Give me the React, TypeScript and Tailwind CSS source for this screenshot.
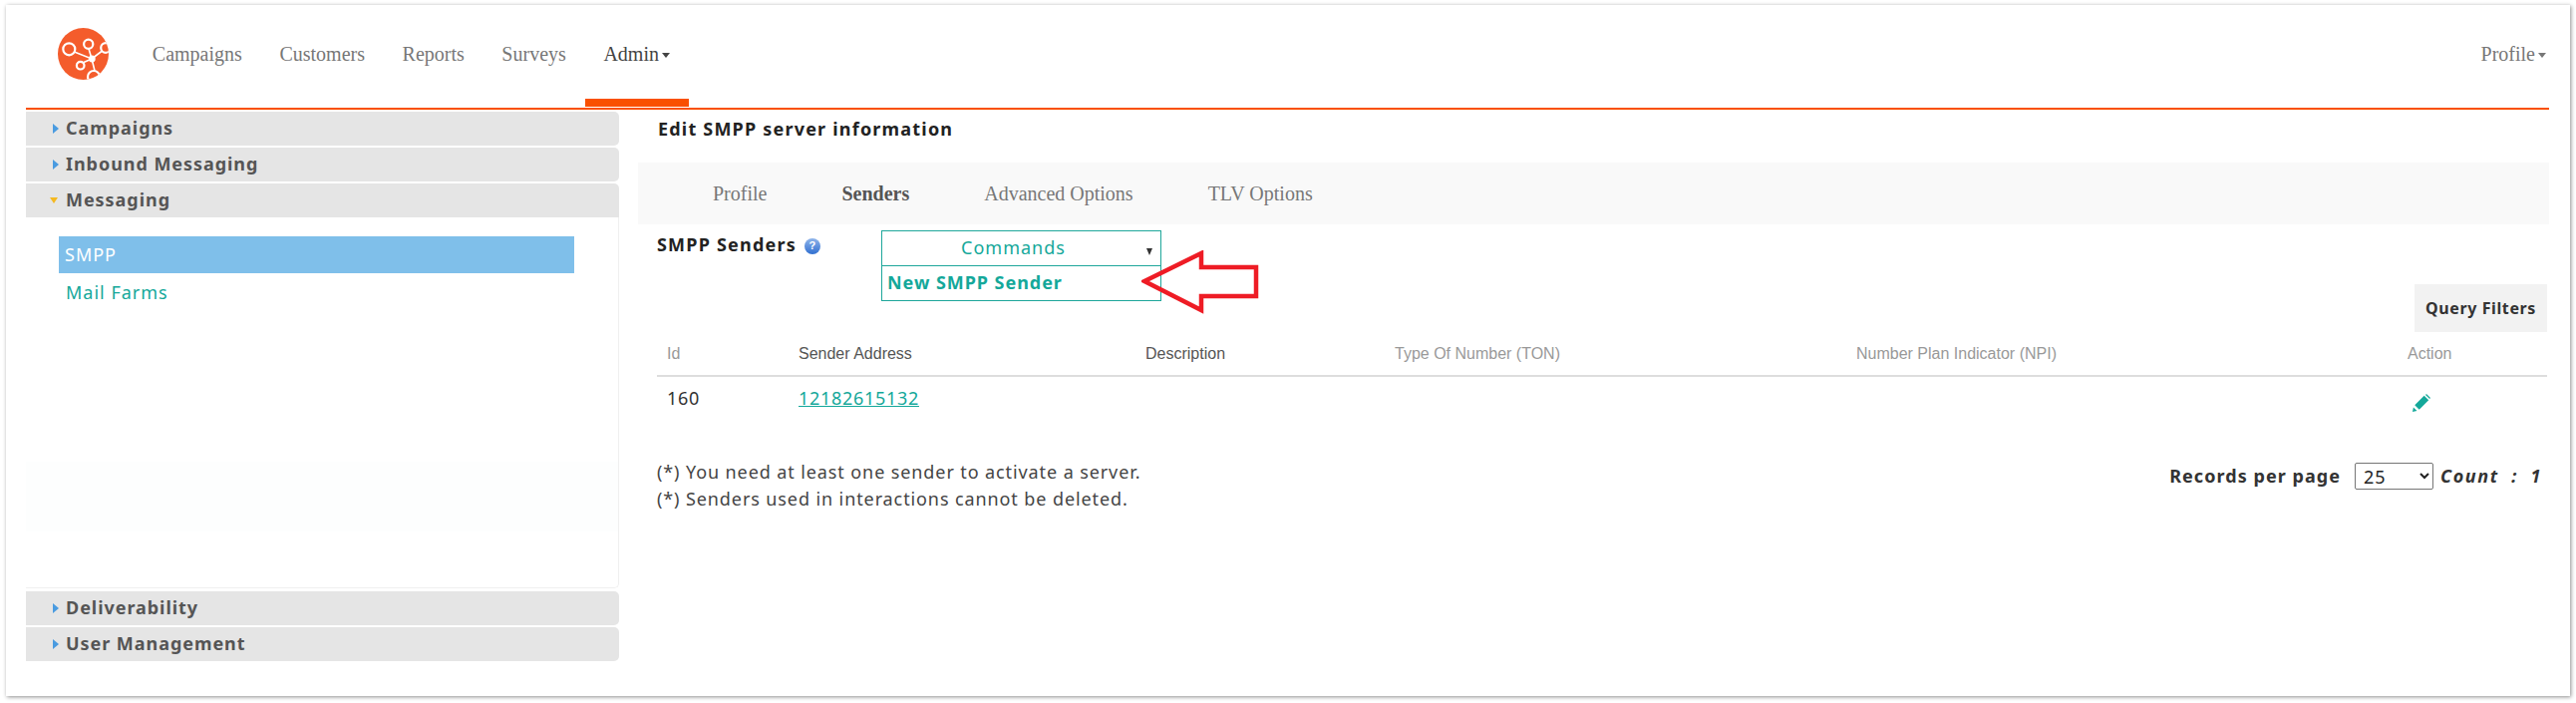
const sans = "font-['Noto_Sans',sans-serif]";

function Caret({ color = "border-t-[#777]" }: { color?: string }) {
  return <span className={`ml-[3px] inline-block h-0 w-0 border-x-[4.5px] border-t-[5px] border-x-transparent ${color}`} />;
}

function Logo() {
  return (
    <svg width="51" height="52" viewBox="0 0 51 52" className="shrink-0">
      <defs>
        <clipPath id="c"><ellipse cx="25.5" cy="26" rx="25.5" ry="26" /></clipPath>
      </defs>
      <ellipse cx="25.5" cy="26" rx="25.5" ry="26" fill="#f45c2c" />
      <g clipPath="url(#c)" stroke="#fff" fill="none" strokeWidth="2.2">
        <path d="M16.5 24 L34 31 L31 21 M26 34.5 L34 31 L44.5 23 M34 31 L37 43" strokeWidth="1.6" />
        <circle cx="11.3" cy="21.3" r="6" />
        <circle cx="30.7" cy="16.3" r="4.6" />
        <circle cx="22.7" cy="37.7" r="3.8" />
        <circle cx="48" cy="20" r="4.8" />
        <circle cx="36" cy="49" r="6" />
        <circle cx="34.3" cy="31" r="3.4" fill="#fff" stroke="none" />
      </g>
    </svg>
  );
}

function AccHeader({ label, open = false, rounded = true }: { label: string; open?: boolean; rounded?: boolean }) {
  return (
    <div className={`flex h-[34px] items-center bg-[#e5e5e5] pl-[24px] ${rounded ? "rounded-r-[5px]" : "rounded-tr-[5px]"}`}>
      <span className="flex w-[16px] justify-start">
        {open ? (
          <span className="h-0 w-0 border-x-[4.5px] border-t-[6px] border-x-transparent border-t-[#f5b921]" />
        ) : (
          <span className="ml-[3px] h-0 w-0 border-y-[5px] border-l-[6px] border-y-transparent border-l-[#4a9be0]" />
        )}
      </span>
      <span className={`${sans} pb-[1px] text-[18px] font-bold tracking-[0.95px] text-[#555]`}>{label}</span>
    </div>
  );
}

const navItems = ["Campaigns", "Customers", "Reports", "Surveys"];
const tabs = ["Profile", "Senders", "Advanced Options", "TLV Options"];

export default function App() {
  return (
    <div className="h-[705px] w-full overflow-hidden bg-white pl-[6px] pt-[5px]">
      <div className="h-[693px] w-[2572px] bg-white pl-[20px] pr-[21px] shadow-[1px_1px_4px_rgba(0,0,0,0.45)]">
        <header className="flex h-[105px] border-b-2 border-[#f95000] font-['Liberation_Serif',serif] text-[20px] text-[#777]">
          <div className="ml-[32px] mt-[23px]"><Logo /></div>
          <nav className="ml-[25px] flex h-[102px]">
            {navItems.map((n) => (
              <div key={n} className="px-[18.8px] pt-[35px] leading-[28px]">{n}</div>
            ))}
            <div className="flex h-[102px] flex-col">
              <div className="h-[94px] whitespace-nowrap pl-[18.8px] pr-[19.2px] pt-[35px] leading-[28px] text-[#444]">
                Admin<span className="relative top-[-3px]"><Caret color="border-t-[#444]" /></span>
              </div>
              <div className="h-[8px] bg-[#f95000]" />
            </div>
          </nav>
          <div className="ml-auto whitespace-nowrap pr-[3px] pt-[35px] leading-[28px]">
            Profile<span className="relative top-[-3px]"><Caret /></span>
          </div>
        </header>

        <div className="flex">
          <aside className="mt-[2px] flex w-[595px] shrink-0 flex-col">
            <div className="flex flex-col gap-[2px]">
              <AccHeader label="Campaigns" />
              <AccHeader label="Inbound Messaging" />
              <AccHeader label="Messaging" open rounded={false} />
            </div>
            <div className="h-[372px] rounded-br-[5px] border-r border-b border-[#f0f0f0] pl-[33px] pt-[19px]">
              <div className={`${sans} flex h-[37px] w-[517px] items-center bg-[#7fbfea] pl-[6px] text-[18px] tracking-[1px] text-white`}>SMPP</div>
              <div className={`${sans} flex h-[38px] items-center pl-[7px] text-[18px] tracking-[1px] text-[#14a89a]`}>Mail Farms</div>
              <div className="mt-[151px] -ml-[33px] h-[70px] bg-[#fdfefe]" />
            </div>
            <div className="mt-[3px] flex flex-col gap-[2px]">
              <AccHeader label="Deliverability" />
              <AccHeader label="User Management" />
            </div>
          </aside>

          <main className="ml-[19px] min-w-0 flex-1">
            <div className={`${sans} mb-[17px] mt-[2px] flex h-[34px] items-center pl-[20px] text-[18px] font-bold tracking-[1.2px] text-[#222]`}>
              Edit SMPP server information
            </div>
            <div className="flex h-[62px] items-center bg-[#f9f9f9] pl-[37.5px] font-['Liberation_Serif',serif] text-[20px] text-[#777]">
              {tabs.map((t) => (
                <div key={t} className={`px-[37.5px] ${t === "Senders" ? "font-bold text-[#555]" : ""}`}>{t}</div>
              ))}
            </div>

            <div className="flex h-[108px] items-start justify-between pl-[19px] pr-[2px]">
              <div className="flex">
                <div className={`${sans} flex h-[40px] w-[225px] items-center text-[18px] font-bold tracking-[1.2px] text-[#222]`}>
                  SMPP Senders
                  <span className="ml-[8px] mt-[3px] flex h-[16px] w-[16px] items-center justify-center rounded-full bg-gradient-to-b from-[#8fb4ea] to-[#2f6fd0] font-['Liberation_Sans',sans-serif] text-[11px] font-bold tracking-normal text-white">?</span>
                </div>
                <div className={`${sans} relative mt-[6px] h-[71px] w-[281px] border border-[#1fa79b]`}>
                  <div className="relative flex h-[35px] items-center justify-center border-b border-[#1fa79b] pb-[2px] pr-[16px] text-[18px] tracking-[1px] text-[#14a89a]">
                    Commands
                    <span className="absolute right-[8px] top-[17px] h-0 w-0 border-x-[3.5px] border-t-[7px] border-x-transparent border-t-[#333]" />
                  </div>
                  <div className="flex h-[34px] items-center pb-[2px] pl-[5px] text-[18px] font-bold tracking-[0.95px] text-[#14a89a]">New SMPP Sender</div>
                  <svg width="120" height="64" viewBox="0 0 120 64" className="absolute left-[260px] top-[19px]">
                    <path d="M3 31 L60 3 L60 17 L115 17 L115 46 L60 46 L60 60 Z" fill="none" stroke="#ee1c25" strokeWidth="4.5" />
                  </svg>
                </div>
              </div>
              <div className={`${sans} mt-[60px] flex h-[48px] w-[133px] items-center justify-center bg-[#f2f2f2] text-[16px] font-bold tracking-[0.6px] text-[#333]`}>
                Query Filters
              </div>
            </div>

            <div className="ml-[19px] mr-[2px]">
              <table className="w-full table-fixed border-collapse text-left">
                <thead>
                  <tr className="h-[44px] border-b-2 border-[#dddddd] font-['Liberation_Sans',sans-serif] text-[16px]">
                    <th className="w-[132px] px-[10px] font-normal text-[#999]">Id</th>
                    <th className="w-[348px] px-[10px] font-normal text-[#555]">Sender Address</th>
                    <th className="w-[250px] px-[10px] font-normal text-[#555]">Description</th>
                    <th className="w-[463px] px-[10px] font-normal text-[#999]">Type Of Number (TON)</th>
                    <th className="w-[553px] px-[10px] font-normal text-[#999]">Number Plan Indicator (NPI)</th>
                    <th className="px-[10px] font-normal text-[#999]">Action</th>
                  </tr>
                </thead>
                <tbody>
                  <tr className={`${sans} h-[42px] align-top text-[18px] tracking-[0.7px] text-[#333]`}>
                    <td className="px-[10px] pt-[8px]">160</td>
                    <td className="px-[10px] pt-[8px]"><span className="text-[#14a89a] underline">12182615132</span></td>
                    <td />
                    <td />
                    <td />
                    <td className="px-[10px] pt-[17px]">
                      <svg width="18" height="18" viewBox="0 0 20 20" className="ml-[5px]">
                        <path d="M0 20 L1 15 L5 19 Z M2.5 12.5 L13 2 L18 7 L7.5 17.5 Z M14.5 1 L15.5 0 L20 4.5 L19 5.5 Z" fill="#14a89a" />
                      </svg>
                    </td>
                  </tr>
                </tbody>
              </table>
              <div className={`${sans} mt-[41px] flex justify-between text-[18px]`}>
                <div className="leading-[27px] tracking-[0.9px] text-[#444]">
                  <div>(*) You need at least one sender to activate a server.</div>
                  <div>(*) Senders used in interactions cannot be deleted.</div>
                </div>
                <div className="mt-[4px] flex h-[27px] items-center font-bold tracking-[1.05px] text-[#333]">
                  <span>Records per page</span>
                  <select defaultValue="25" className="ml-[14px] h-[27px] w-[79px] rounded-[2px] border border-[#767676] bg-white pl-[4px] font-normal text-[#222]">
                    <option>25</option>
                    <option>50</option>
                  </select>
                  <span className="ml-[7px] w-[107px] whitespace-pre italic tracking-[1.6px]">Count  :  1</span>
                </div>
              </div>
            </div>
          </main>
        </div>
      </div>
    </div>
  );
}
